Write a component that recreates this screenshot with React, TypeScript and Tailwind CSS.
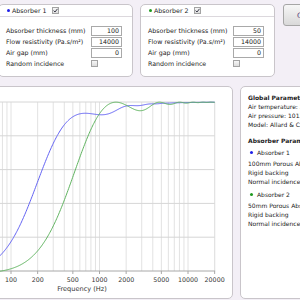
import { useMemo } from 'react';

// page-space -> svg-space offsets (chart panel starts at x=-100, y=86, 1px border)
const OX = 99;
const OY = -87;

const fx = (f: number) => 11 + 88.5 * (Math.log10(f) - 2) + OX;
const ay = (a: number) => 271 - 169 * a + OY;

type Cx = [number, number];
const mul = (a: Cx, b: Cx): Cx => [a[0] * b[0] - a[1] * b[1], a[0] * b[1] + a[1] * b[0]];
const div = (a: Cx, b: Cx): Cx => {
  const d = b[0] * b[0] + b[1] * b[1];
  return [(a[0] * b[0] + a[1] * b[1]) / d, (a[1] * b[0] - a[0] * b[1]) / d];
};

// Delany-Bazley porous layer on rigid backing, normal incidence
function absorption(f: number, d: number, sigma: number) {
  const X = (1.204 * f) / sigma;
  const zc: Cx = [1 + 0.0571 * Math.pow(X, -0.754), -0.087 * Math.pow(X, -0.732)];
  const k0 = (2 * Math.PI * f) / 343;
  const a = k0 * d * (1 + 0.0978 * Math.pow(X, -0.7));
  const b = -k0 * d * 0.189 * Math.pow(X, -0.595);
  const sin: Cx = [Math.sin(a) * Math.cosh(b), Math.cos(a) * Math.sinh(b)];
  const cos: Cx = [Math.cos(a) * Math.cosh(b), -Math.sin(a) * Math.sinh(b)];
  const p = mul(zc, div(cos, sin));
  const zs: Cx = [p[1], -p[0]];
  const r = div([zs[0] - 1, zs[1]], [zs[0] + 1, zs[1]]);
  return 1 - (r[0] * r[0] + r[1] * r[1]);
}

function curve(d: number, sigma: number) {
  const pts: string[] = [];
  for (let i = 0; i <= 400; i++) {
    const f = 20 * Math.pow(1000, i / 400);
    pts.push(`${fx(f).toFixed(2)},${ay(absorption(f, d, sigma)).toFixed(2)}`);
  }
  return pts.join(' ');
}

const gridFreqs: number[] = [];
for (const dec of [10, 100, 1000, 10000]) {
  for (let m = 1; m <= 9; m++) {
    const f = dec * m;
    if (f >= 20 && f <= 20000) gridFreqs.push(f);
  }
}
gridFreqs.push(20000);

const labelFreqs = [20, 50, 100, 200, 500, 1000, 2000, 5000, 10000, 20000];

function Chart() {
  const blue = useMemo(() => curve(0.1, 14000), []);
  const green = useMemo(() => curve(0.05, 14000), []);
  return (
    <svg width="331" height="211" className="block" fontFamily="'DejaVu Sans', sans-serif">
      {gridFreqs.map((f) => (
        <line key={f} x1={fx(f)} x2={fx(f)} y1={ay(1)} y2={ay(0)} stroke="#e2e2e2" strokeWidth="1" />
      ))}
      {[0.2, 0.4, 0.6, 0.8, 1].map((a) => (
        <line key={a} x1={fx(20)} x2={fx(20000)} y1={ay(a)} y2={ay(a)} stroke="#d6d6d6" strokeWidth="1" />
      ))}
      {[0, 0.2, 0.4, 0.6, 0.8, 1].map((a) => (
        <text key={a} x={fx(20) - 4} y={ay(a) + 2} fontSize="6.3" fill="#333" textAnchor="end">
          {a.toFixed(1)}
        </text>
      ))}
      <line x1={fx(20)} x2={fx(20000) + 0.5} y1={ay(0)} y2={ay(0)} stroke="#a8a8a8" strokeWidth="1" />
      {labelFreqs.map((f) => (
        <g key={f}>
          <line x1={fx(f)} x2={fx(f)} y1={ay(0)} y2={ay(0) + 3} stroke="#a8a8a8" strokeWidth="1" />
          <text x={fx(f)} y={ay(0) + 10.5} fontSize="6.3" fill="#333" textAnchor="middle">
            {f}
          </text>
        </g>
      ))}
      <text x={82 + OX} y={291 + OY} fontSize="6.6" fill="#333" textAnchor="middle">
        Frequency (Hz)
      </text>
      <polyline points={blue} fill="none" stroke="#6262f2" strokeWidth="1" />
      <polyline points={green} fill="none" stroke="#5fb35f" strokeWidth="1" />
    </svg>
  );
}

function Check({ checked }: { checked?: boolean }) {
  return (
    <span className="w-[7px] h-[7px] border border-[#a3a3a3] bg-gradient-to-b from-[#f7f7f7] to-[#dcdcdc] flex items-center justify-center">
      {checked && (
        <svg width="5" height="5" viewBox="0 0 5 5">
          <path d="M0.6 2.6 L2 4 L4.5 0.8" fill="none" stroke="#3b3b4a" strokeWidth="1" />
        </svg>
      )}
    </span>
  );
}

function AbsorberPanel({ title, dot, thickness }: { title: string; dot: string; thickness: string }) {
  const rows: [string, string][] = [
    ['Absorber thickness (mm)', thickness],
    ['Flow resistivity (Pa.s/m²)', '14000'],
    ['Air gap (mm)', '0'],
  ];
  return (
    <div className="w-[135px] h-[73px] shrink-0 bg-white border border-[#c9c5ca] rounded-[5px]">
      <div className="h-[12px] border-b border-[#dcd8dd] flex items-center pl-[8px]">
        <span className={`w-[3px] h-[3px] rounded-full ${dot}`} />
        <span className="ml-[2px] mr-[5px]">{title}</span>
        <Check checked />
      </div>
      <div className="pt-[8px] pl-[7px] pr-[10px]">
        {rows.map(([label, value]) => (
          <div key={label} className="h-[11px] flex items-center">
            <span className="w-[85px]">{label}</span>
            <span className="w-[31px] h-[10px] border border-[#a9a9a9] bg-white text-right pr-[2px] leading-[8px]">
              {value}
            </span>
          </div>
        ))}
        <div className="h-[11px] flex items-center">
          <span className="w-[85px]">Random incidence</span>
          <Check />
        </div>
      </div>
    </div>
  );
}

export default function App() {
  return (
    <div className="w-[300px] h-[300px] overflow-hidden bg-[#f3eff6] text-[#222] font-['DejaVu_Sans',sans-serif] text-[6.3px] leading-[9px]">
      <div className="flex items-start gap-[7px] pt-[4px] -ml-[2px]">
        <AbsorberPanel title="Absorber 1" dot="bg-[#2020e8]" thickness="100" />
        <AbsorberPanel title="Absorber 2" dot="bg-[#1f9a1f]" thickness="50" />
        <button className="ml-[1px] shrink-0 w-[70px] h-[22px] border border-[#a6a6a6] rounded-[3px] bg-gradient-to-b from-[#f7f7f7] to-[#d9d9d9] text-left pl-[13px] text-[7.5px] text-[#5b3f7c]">
          Calculate
        </button>
      </div>
      <div className="flex gap-[7px] mt-[9px] -ml-[100px]">
        <div className="w-[333px] h-[213px] shrink-0 bg-white border border-[#c9c5ca] rounded-[5px] overflow-hidden">
          <Chart />
        </div>
        <div className="w-[80px] h-[213px] shrink-0 bg-white border border-[#c9c5ca] rounded-[5px] pl-[7px] pt-[6px] text-[6px] whitespace-nowrap overflow-hidden">
          <div className="font-bold">Global Parameters</div>
          <div>Air temperature: 20°C</div>
          <div>Air pressure: 101325 Pa</div>
          <div>Model: Allard &amp; Champoux</div>
          <div className="font-bold mt-[7px]">Absorber Parameters</div>
          <div className="mt-[3px] mb-[2px] pl-[2px] flex items-center">
            <span className="w-[3px] h-[3px] rounded-full bg-[#2020e8] mr-[4px]" />
            Absorber 1
          </div>
          <div>100mm Porous Absorber</div>
          <div>Rigid backing</div>
          <div>Normal incidence</div>
          <div className="mt-[4px] mb-[2px] pl-[2px] flex items-center">
            <span className="w-[3px] h-[3px] rounded-full bg-[#1f9a1f] mr-[4px]" />
            Absorber 2
          </div>
          <div>50mm Porous Absorber</div>
          <div>Rigid backing</div>
          <div>Normal incidence</div>
        </div>
      </div>
    </div>
  );
}
